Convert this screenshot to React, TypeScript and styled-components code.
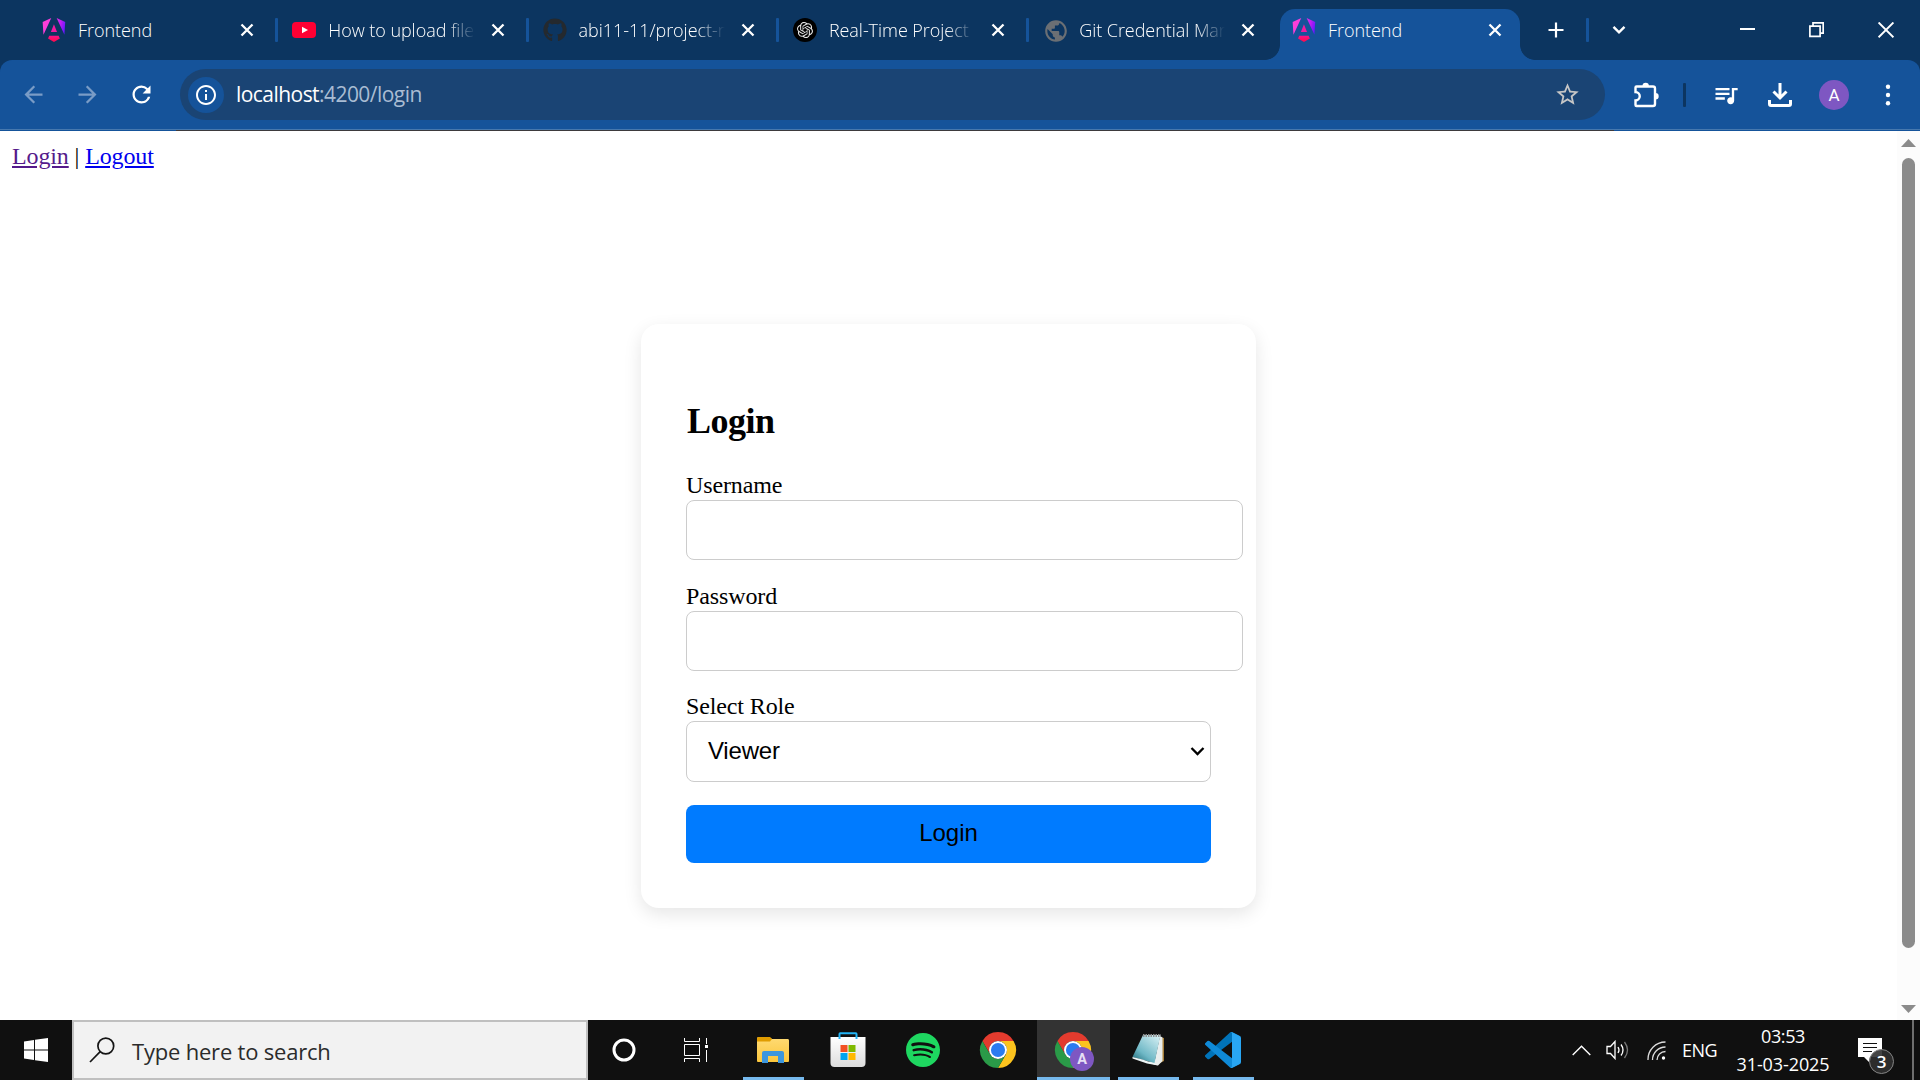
import React from "react";
import styled, { createGlobalStyle } from "styled-components";
import { FaGithub } from "react-icons/fa";
import { SiOpenai, SiSpotify } from "react-icons/si";
import {
  MdArrowBack,
  MdArrowForward,
  MdRefresh,
  MdInfoOutline,
  MdStarBorder,
  MdQueueMusic,
  MdPublic,
} from "react-icons/md";

const ui = `"Segoe UI", "Open Sans", "Noto Sans", sans-serif`;

const GlobalStyle = createGlobalStyle`
  *, *::before, *::after { box-sizing: border-box; }
  body { margin: 0; overflow: hidden; background: #fff; }
  svg { display: block; flex: none; }
`;

const Screen = styled.div`
  display: flex;
  flex-direction: column;
  width: 1920px;
  height: 1080px;
  overflow: hidden;
`;

/* Tab strip */
const TabStrip = styled.div`
  display: flex;
  height: 60px;
  flex: none;
  padding-left: 26px;
  background: #0c3560;
  color: #fff;
  font-family: ${ui};
`;

const Tab = styled.div<{ $active?: boolean }>`
  position: relative;
  display: flex;
  align-items: center;
  width: ${(p) => (p.$active ? 240 : 250.3)}px;
  height: ${(p) => (p.$active ? 51 : 60)}px;
  margin-top: ${(p) => (p.$active ? 9 : 0)}px;
  margin-left: ${(p) => (p.$active ? 2.5 : 0)}px;
  padding: ${(p) => (p.$active ? "0 14px 9px 12px" : "0 18px 0 16px")};
  flex: none;
  border-radius: 15px 15px 0 0;
  background: ${(p) => (p.$active ? "#15539a" : "transparent")};
  &::before,
  &::after {
    content: ${(p) => (p.$active ? '""' : "none")};
    position: absolute;
    bottom: 0;
    width: 15px;
    height: 15px;
  }
  &::before {
    left: -15px;
    background: radial-gradient(circle at 0 0, transparent 14.5px, #15539a 15.2px);
  }
  &::after {
    right: -15px;
    background: radial-gradient(circle at 100% 0, transparent 14.5px, #15539a 15.2px);
  }
`;

const Favicon = styled.span`
  display: grid;
  place-items: center;
  width: 24px;
  height: 24px;
  flex: none;
`;

const TabTitle = styled.span<{ $fade?: boolean }>`
  flex: 1;
  margin: 0 12px 0 12px;
  padding-bottom: 1px;
  overflow: hidden;
  white-space: nowrap;
  font-size: 18px;
  font-weight: 300;
  line-height: 26px;
  letter-spacing: -0.05px;
  mask-image: ${(p) => (p.$fade ? "linear-gradient(90deg, #000 80%, transparent 100%)" : "none")};
`;

const Separator = styled.span`
  width: 3px;
  height: 24px;
  flex: none;
  border-radius: 1px;
  background: #15539a;
`;

const ToolbarDivider = styled(Separator)`
  margin: 0 13px 0 10px;
  background: #0c3560;
`;

const TabEdge = styled(Separator)`
  position: absolute;
  right: -2px;
  top: 18px;
`;

const StripButton = styled.span<{ $w: number }>`
  display: grid;
  place-items: center;
  width: ${(p) => p.$w}px;
  height: 60px;
  flex: none;
`;

const StripTools = styled.div`
  display: flex;
  align-items: center;
  margin-left: 6px;
  flex: 1;
`;

const WindowButtons = styled.div`
  display: flex;
  margin-left: auto;
`;

/* Toolbar */
const ToolbarBack = styled.div`
  flex: none;
  background: #0c3560;
`;

const Toolbar = styled.div`
  display: flex;
  align-items: center;
  height: 69px;
  padding-left: 6px;
  border-radius: 12px 12px 0 0;
  background: #15539a;
  color: #fff;
  font-family: ${ui};
`;

const ToolSlot = styled.span<{ $dim?: boolean }>`
  display: grid;
  place-items: center;
  width: 54px;
  height: 54px;
  flex: none;
  color: ${(p) => (p.$dim ? "#7a9cc6" : "#fff")};
`;

const Omnibox = styled.div`
  display: flex;
  align-items: center;
  width: 1425px;
  height: 51px;
  margin: 0 14px 0 12px;
  padding: 0 24px 0 8px;
  border-radius: 26px;
  background: #1a4474;
`;

const InfoChip = styled.span`
  display: grid;
  place-items: center;
  width: 36px;
  height: 36px;
  border-radius: 50%;
  background: #15539a;
`;

const Url = styled.span`
  flex: 1;
  margin-left: 12px;
  padding-bottom: 1px;
  font-size: 21px;
  line-height: 30px;
  letter-spacing: -0.55px;
  color: #a9bcd3;
`;

const Host = styled.span`
  color: #fff;
`;

const Avatar = styled.span`
  display: grid;
  place-items: center;
  width: 30px;
  height: 30px;
  border-radius: 50%;
  background: #7e57c2;
  color: #fff;
  font: 400 17px/30px Roboto, sans-serif;
`;

const EdgeLine = styled.div`
  height: 2px;
  flex: none;
  padding: 1px 306px 0 176px;
  background: linear-gradient(#4678ae 50%, #15539a 50%);
`;

const EdgeShade = styled.div`
  height: 1px;
  background: #3d3a3c;
`;

/* Page */
const Viewport = styled.div`
  display: flex;
  flex: 1;
  min-height: 0;
  background: #fff;
`;

const Page = styled.main`
  display: flex;
  flex-direction: column;
  flex: 1;
  padding: 12px;
  color: #000;
  font: 24px/27px "Liberation Serif", "Times New Roman", serif;
`;

const Nav = styled.nav`
  height: 27px;
  letter-spacing: -0.12px;
`;

const NavLink = styled.a<{ $visited?: boolean }>`
  color: ${(p) => (p.$visited ? "#551a8b" : "#0000ee")};
  text-decoration: underline;
`;

const Card = styled.form`
  width: 615px;
  height: 584px;
  margin: 154px auto 0;
  padding: 45px;
  border-radius: 18px;
  background: #fff;
  box-shadow: 0 6px 18px rgba(0, 0, 0, 0.1);
`;

const Title = styled.h2`
  margin: 32px 0 31px 1px;
  font-size: 36px;
  font-weight: 700;
  line-height: 41px;
  letter-spacing: -0.5px;
`;

const Field = styled.div<{ $gap: number }>`
  display: flex;
  flex-direction: column;
  margin-bottom: ${(p) => p.$gap}px;
`;

const FieldLabel = styled.label`
  padding-bottom: 2px;
  line-height: 25px;
  letter-spacing: -0.12px;
`;

const Input = styled.input`
  width: 557px;
  height: 60px;
  padding: 15px;
  border: 1px solid #ccc;
  border-radius: 8px;
  background: #fff;
`;

const Select = styled.div`
  display: flex;
  align-items: center;
  justify-content: space-between;
  width: 525px;
  height: 61px;
  padding: 0 5px 1px 21px;
  border: 1px solid #ccc;
  border-radius: 8px;
  font: 24px/28px "Liberation Sans", Arial, sans-serif;
  letter-spacing: -0.2px;
`;

const Submit = styled.button`
  display: block;
  width: 525px;
  height: 58px;
  padding: 0 0 2px;
  border: 0;
  border-radius: 8px;
  background: #007bff;
  color: #000;
  font: 24px/28px "Liberation Sans", Arial, sans-serif;
`;

const Scrollbar = styled.div`
  display: flex;
  flex-direction: column;
  align-items: center;
  width: 23px;
  padding: 8px 0 7px;
  background: #fcfcfc;
`;

const Thumb = styled.div`
  width: 13px;
  height: 790px;
  margin: 11px 0 auto;
  border-radius: 7px;
  background: #8b8b8b;
`;

/* Taskbar */
const Taskbar = styled.div`
  display: flex;
  height: 60px;
  flex: none;
  background: #101010;
  color: #fff;
  font-family: ${ui};
`;

const TaskSlot = styled.div<{ $w?: number; $running?: boolean; $active?: boolean }>`
  display: flex;
  align-items: center;
  justify-content: center;
  width: ${(p) => p.$w ?? 75}px;
  height: 60px;
  flex: none;
  background: ${(p) =>
    p.$running
      ? `linear-gradient(#76b9ed, #76b9ed) center bottom / ${p.$active ? 73 : 61}px 3px no-repeat, ${
          p.$active ? "linear-gradient(#333, #333) center / 73px 100% no-repeat" : "none"
        }`
      : "none"};
`;

const SearchBox = styled.div`
  display: flex;
  align-items: center;
  width: 516px;
  height: 60px;
  padding-left: 15px;
  flex: none;
  border: 2px solid #c0c0c0;
  background: #f2f2f2;
  color: #2b2b2b;
  font-size: 22px;
`;

const SearchText = styled.span`
  margin: 2px 0 0 17px;
  letter-spacing: -0.2px;
  line-height: 30px;
`;

const Apps = styled.div`
  display: flex;
  margin-left: 4px;
  & > div {
    padding-right: 2px;
  }
`;

const Tray = styled.div`
  display: flex;
  align-items: center;
  margin-left: auto;
  height: 60px;
`;

const Lang = styled.span`
  width: 40px;
  margin-left: 8px;
  font-size: 18px;
  line-height: 24px;
  letter-spacing: -0.5px;
`;

const Clock = styled.div`
  display: flex;
  flex-direction: column;
  align-items: center;
  width: 110px;
  margin-left: 6px;
  font-size: 18px;
  line-height: 28px;
  letter-spacing: -0.1px;
  white-space: nowrap;
`;

const Time = styled.span`
  letter-spacing: -0.4px;
`;

const Notifications = styled.div`
  position: relative;
  width: 24px;
  height: 24px;
  margin-left: 20px;
`;

const Badge = styled.span`
  position: absolute;
  left: 11px;
  top: 11px;
  width: 25px;
  height: 25px;
  border: 1px solid #858585;
  border-radius: 50%;
  background: rgba(48, 48, 48, 0.9);
  font-size: 17px;
  font-weight: 600;
  line-height: 23px;
  text-align: center;
`;

const ShowDesktop = styled.span`
  width: 8px;
  height: 60px;
  margin-left: 30px;
  border-left: 2px solid #6f6f6f;
`;

const AngularIcon = ({ id }: { id: string }) => (
  <svg width="24" height="24" viewBox="0 0 223 236">
    <defs>
      <linearGradient id={`${id}-a`} gradientUnits="userSpaceOnUse" x1="0" y1="60" x2="223" y2="110">
        <stop offset="0" stopColor="#ff41d5" />
        <stop offset="0.45" stopColor="#f637e3" />
        <stop offset="0.75" stopColor="#c01cf2" />
        <stop offset="1" stopColor="#5c18ff" />
      </linearGradient>
      <linearGradient id={`${id}-b`} x1="0" y1="0" x2="0" y2="1">
        <stop offset="0" stopColor="#f9138a" />
        <stop offset="1" stopColor="#ff0a48" />
      </linearGradient>
    </defs>
    <path
      fill={`url(#${id}-a)`}
      d="m222.077 39.192-8.019 125.923L137.387 0l84.69 39.192ZM7.937 165.115 0 39.192 84.69 0 7.937 165.115Z"
    />
    <path fill={`url(#${id}-b)`} d="m168.972 202.017-57.933 33.056-57.934-33.056 11.783-28.556h92.301l11.783 28.556Z" />
    <path fill="#f21ba0" d="m111.039 62.675 30.357 73.803H80.681l30.358-73.803Z" />
  </svg>
);

const YouTubeIcon = () => (
  <svg width="24" height="24" viewBox="0 0 24 24">
    <rect y="4" width="24" height="16" rx="4" fill="#ff0033" />
    <path d="M10 8.7v6.600l6-3.300z" fill="#fff" />
  </svg>
);

const ChatIcon = () => (
  <svg width="24" height="24" viewBox="0 0 24 24">
    <circle cx="12" cy="12" r="12" fill="#000" />
    <SiOpenai x="4" y="4" size={16} color="#e8e8e8" />
  </svg>
);

const CrossIcon = () => (
  <svg width="14" height="14" viewBox="0 0 14 14" stroke="#fff" strokeWidth="2.300">
    <path d="M1.500 1.500l11 11M12.500 1.500l-11 11" />
  </svg>
);

const ChromeIcon = ({ profile }: { profile?: boolean }) => (
  <svg width="40" height="40" viewBox="-2 -2 40 40" overflow="visible">
    <g transform="scale(.75)">
      <path fill="#e33b2e" d="M24 12H44.785A24 24 0 0 0 3.215 12L13.608 30A12 12 0 0 1 24 12Z" />
      <path fill="#fcc31e" d="M34.390 30L24 48A24 24 0 0 0 44.785 12H24A12 12 0 0 1 34.390 30Z" />
      <path fill="#2a9a48" d="M13.608 30L3.215 12A24 24 0 0 0 24 48L34.390 30A12 12 0 0 1 13.608 30Z" />
      <circle cx="24" cy="24" r="12" fill="#fff" />
      <circle cx="24" cy="24" r="9.400" fill="#2b7bf0" />
    </g>
    {profile && (
      <g>
        <circle cx="27" cy="27" r="12" fill="#7e57c2" />
        <text x="27" y="32.200" fill="#e6def4" fontSize="14.500" fontWeight="700" fontFamily="Roboto, sans-serif" textAnchor="middle">
          A
        </text>
      </g>
    )}
  </svg>
);

const FolderIcon = () => (
  <svg width="32" height="27" viewBox="0 0 32 27">
    <defs>
      <linearGradient id="folder" x1="0" y1="0" x2="0" y2="1">
        <stop offset="0" stopColor="#ffdb75" />
        <stop offset="1" stopColor="#fbc63c" />
      </linearGradient>
    </defs>
    <path d="M0 1.500Q0 0 1.500 0H12l3 2H31q1 0 1 1.500V24q0 1-1 1H1q-1 0-1-1z" fill="url(#folder)" />
    <path d="M0 4.500V1.500Q0 0 1.500 0H13l2 2-2 2.500z" fill="#e09c00" />
    <path d="M5 26V16q0-2 2-2h18q2 0 2 2v10h-6v-7H11v7z" fill="#3c96dd" />
  </svg>
);

const StoreIcon = () => (
  <svg width="36" height="36" viewBox="0 0 36 36">
    <defs>
      <linearGradient id="bag" x1="0" y1="0" x2="0" y2="1">
        <stop offset="0" stopColor="#fff" />
        <stop offset="1" stopColor="#dcdcdc" />
      </linearGradient>
    </defs>
    <path d="M.5 5h35v26q0 4-4 4h-27q-4 0-4-4z" fill="url(#bag)" />
    <path d="M9.500 7V2q0-.7.700-.7h15.600q.7 0 .7.700v5" fill="none" stroke="#22b4f5" strokeWidth="2" />
    <path fill="#f25022" d="M10.500 13h7v7h-7z" />
    <path fill="#7fba00" d="M18.500 13h7v7h-7z" />
    <path fill="#00a4ef" d="M10.500 21h7v7h-7z" />
    <path fill="#ffb900" d="M18.500 21h7v7h-7z" />
  </svg>
);

const NotepadIcon = () => (
  <svg width="34" height="34" viewBox="0 0 34 34">
    <defs>
      <linearGradient id="cover" x1="0" y1="1" x2=".8" y2="0">
        <stop offset="0" stopColor="#17616f" />
        <stop offset=".4" stopColor="#6fb8c6" />
        <stop offset="1" stopColor="#cdebf0" />
      </linearGradient>
    </defs>
    <path d="M29 4l4 1v23l-4 2z" fill="#a8803a" />
    <path d="M29 3l2.500 1.500V28L27 32.500l-11-3 8-3z" fill="#e9eeee" />
    <path d="M12 2h17.500l-6 28L1.500 24z" fill="url(#cover)" />
    <path d="M1.500 24l10 2.500 13 4.500 2.500 1.500-11-2-14.500-5z" fill="#eef6f7" />
    <path d="M12 2.500h18" stroke="#8f8f8f" strokeWidth="3" strokeDasharray="1.500 1" />
  </svg>
);

const CodeIcon = () => (
  <svg width="36" height="36" viewBox="0 0 100 100">
    <path
      fill="#0073b9"
      d="M96.461 10.796 75.857.876a6.230 6.230 0 0 0-7.107 1.207L1.299 63.583a4.167 4.167 0 0 0 .004 6.162l5.510 5.009a4.167 4.167 0 0 0 5.321.236l81.227-61.620c2.725-2.067 6.639-.124 6.639 3.297v-.240a6.250 6.250 0 0 0-3.539-5.631Z"
    />
    <path
      fill="#0f8ad8"
      d="m96.461 89.204-20.604 9.920a6.230 6.230 0 0 1-7.107-1.207L1.299 36.417a4.167 4.167 0 0 1 .004-6.162l5.510-5.009a4.167 4.167 0 0 1 5.321-.236l81.227 61.620c2.725 2.067 6.639.124 6.639-3.297v.240a6.250 6.250 0 0 1-3.539 5.631Z"
    />
    <path
      fill="#29a6f3"
      d="M75.858 99.126a6.230 6.230 0 0 1-7.108-1.209C71.056 100.223 75 98.590 75 95.328V4.672c0-3.262-3.944-4.895-6.250-2.589A6.230 6.230 0 0 1 75.858.874l20.601 9.907A6.250 6.250 0 0 1 100 16.413v67.174a6.250 6.250 0 0 1-3.541 5.633l-20.601 9.906Z"
    />
  </svg>
);

const tabs: { title: string; icon: React.ReactNode; fade?: boolean; active?: boolean }[] = [
  { title: "Frontend", icon: <AngularIcon id="first" /> },
  { title: "How to upload files", icon: <YouTubeIcon />, fade: true },
  { title: "abi11-11/project-m", icon: <FaGithub size={24} color="#24292e" />, fade: true },
  { title: "Real-Time Project I", icon: <ChatIcon />, fade: true },
  { title: "Git Credential Man", icon: <MdPublic size={26} color="#6b6f74" />, fade: true },
  { title: "Frontend", icon: <AngularIcon id="last" />, active: true },
];

export default function App() {
  return (
    <Screen>
      <GlobalStyle />
      <TabStrip>
        {tabs.map((t, i) => (
          <Tab key={i} $active={t.active}>
            <Favicon>{t.icon}</Favicon>
            <TabTitle $fade={t.fade}>{t.title}</TabTitle>
            <StripButton $w={22}>
              <CrossIcon />
            </StripButton>
            {i < 4 && <TabEdge />}
          </Tab>
        ))}
        <StripTools>
          <StripButton $w={60}>
            <svg width="16" height="16" viewBox="0 0 16 16" stroke="#fff" strokeWidth="2.200">
              <path d="M8 .5v15M.5 8h15" />
            </svg>
          </StripButton>
          <Separator />
          <StripButton $w={60}>
            <svg width="14" height="10" viewBox="0 0 14 10" fill="none" stroke="#fff" strokeWidth="2.400">
              <path d="M1.500 1.800L7 7.300l5.500-5.500" />
            </svg>
          </StripButton>
          <WindowButtons>
            <StripButton $w={69}>
              <svg width="15" height="16" viewBox="0 0 15 16">
                <path d="M0 6h15v2H0z" fill="#fff" />
              </svg>
            </StripButton>
            <StripButton $w={69}>
              <svg width="15" height="17" viewBox="0 0 15 17" fill="none" stroke="#fff" strokeWidth="1.700">
                <path d="M.9 4.100h10.200v10.200H.9zM4 4V.9h10.200v10.200H11" />
              </svg>
            </StripButton>
            <StripButton $w={69}>
              <svg width="16" height="17" viewBox="0 0 16 17" stroke="#fff" strokeWidth="1.900">
                <path d="M.6.500l14.800 14.800M15.400.500L.6 15.300" />
              </svg>
            </StripButton>
          </WindowButtons>
        </StripTools>
      </TabStrip>

      <ToolbarBack>
        <Toolbar>
          <ToolSlot $dim>
            <MdArrowBack size={27} />
          </ToolSlot>
          <ToolSlot $dim>
            <MdArrowForward size={27} />
          </ToolSlot>
          <ToolSlot>
            <MdRefresh size={27} />
          </ToolSlot>
          <Omnibox>
            <InfoChip>
              <MdInfoOutline size={24} />
            </InfoChip>
            <Url>
              <Host>localhost</Host>:4200/login
            </Url>
            <MdStarBorder size={27} color="#c6c6c6" />
          </Omnibox>
          <ToolSlot>
            <svg width="26" height="26" viewBox="0 0 26 26">
              <path
                d="M3.500 4.500h16.500q2 0 2 2V22q0 2-2 2H3.500q-1 0-1-1v-4.500a3.600 3.600 0 0 0 0-8.500V5.500q0-1 1-1z"
                fill="none"
                stroke="#fff"
                strokeWidth="2.400"
              />
              <path d="M9.500 4a3.200 3.200 0 0 1 6.400 0zM22.500 11a3.200 3.200 0 0 1 0 6.400z" fill="#fff" />
            </svg>
          </ToolSlot>
          <ToolbarDivider />
          <ToolSlot>
            <MdQueueMusic size={28} />
          </ToolSlot>
          <ToolSlot>
            <svg width="24" height="26" viewBox="0 0 24 26" fill="none" stroke="#fff" strokeWidth="3">
              <path d="M12 1v14M5.500 9.500L12 16l6.500-6.500" />
              <path d="M1.500 18v4q0 1.500 1.500 1.500h18q1.500 0 1.500-1.500v-4" />
            </svg>
          </ToolSlot>
          <ToolSlot>
            <Avatar>A</Avatar>
          </ToolSlot>
          <ToolSlot>
            <svg width="6" height="22" viewBox="0 0 6 22" fill="#fff">
              <circle cx="3" cy="2.700" r="2.200" />
              <circle cx="3" cy="11" r="2.200" />
              <circle cx="3" cy="19.300" r="2.200" />
            </svg>
          </ToolSlot>
        </Toolbar>
      </ToolbarBack>
      <EdgeLine>
        <EdgeShade />
      </EdgeLine>

      <Viewport>
        <Page>
          <Nav>
            <NavLink $visited>Login</NavLink> | <NavLink>Logout</NavLink>
          </Nav>
          <Card>
            <Title>Login</Title>
            <Field $gap={24}>
              <FieldLabel>Username</FieldLabel>
              <Input type="text" />
            </Field>
            <Field $gap={23}>
              <FieldLabel>Password</FieldLabel>
              <Input type="password" />
            </Field>
            <Field $gap={23}>
              <FieldLabel>Select Role</FieldLabel>
              <Select>
                Viewer
                <svg width="15" height="11" viewBox="0 0 15 11" fill="none" stroke="#000" strokeWidth="2.300">
                  <path d="M1.500 2l6 6 6-6" />
                </svg>
              </Select>
            </Field>
            <Submit type="button">Login</Submit>
          </Card>
        </Page>
        <Scrollbar>
          <svg width="15" height="8" viewBox="0 0 15 8">
            <path d="M7.500 0L15 8H0z" fill="#8b8b8b" />
          </svg>
          <Thumb />
          <svg width="15" height="8" viewBox="0 0 15 8">
            <path d="M7.500 8L15 0H0z" fill="#8b8b8b" />
          </svg>
        </Scrollbar>
      </Viewport>

      <Taskbar>
        <TaskSlot $w={72}>
          <svg width="24" height="24" viewBox="0 0 24 24" fill="#fff">
            <path d="M0 3.400l10-1.400v9.500H0zM11 1.800L24 0v11.500H11zM0 12.500h10V22L0 20.600zM11 12.500h13V24l-13-1.800z" />
          </svg>
        </TaskSlot>
        <SearchBox>
          <svg width="26" height="26" viewBox="0 0 26 26" fill="none" stroke="#151515" strokeWidth="1.700">
            <circle cx="16.800" cy="9" r="7.900" />
            <path d="M11.200 14.600L1 25" />
          </svg>
          <SearchText>Type here to search</SearchText>
        </SearchBox>
        <TaskSlot $w={72}>
          <svg width="24" height="24" viewBox="0 0 24 24">
            <circle cx="12" cy="12" r="10" fill="none" stroke="#fff" strokeWidth="3" />
          </svg>
        </TaskSlot>
        <TaskSlot $w={72}>
          <svg width="24" height="24" viewBox="0 0 24 24" fill="none" stroke="#fff">
            <path d="M.5 0v3.500h15V0M.5 24v-3.500h15V24M.5 6.500h15v11H.5zM22.500 0v6M22.500 12v12" />
            <path d="M21 7h3v3h-3z" fill="#fff" stroke="none" />
          </svg>
        </TaskSlot>
        <Apps>
          <TaskSlot $running>
            <FolderIcon />
          </TaskSlot>
          <TaskSlot>
            <StoreIcon />
          </TaskSlot>
          <TaskSlot>
            <SiSpotify size={34} color="#1ed760" />
          </TaskSlot>
          <TaskSlot>
            <ChromeIcon />
          </TaskSlot>
          <TaskSlot $running $active>
            <ChromeIcon profile />
          </TaskSlot>
          <TaskSlot $running>
            <NotepadIcon />
          </TaskSlot>
          <TaskSlot $running>
            <CodeIcon />
          </TaskSlot>
        </Apps>
        <Tray>
          <TaskSlot $w={33}>
            <svg width="19" height="11" viewBox="0 0 19 11" fill="none" stroke="#fff" strokeWidth="1.400">
              <path d="M.7 10L9.500 1.200 18.300 10" />
            </svg>
          </TaskSlot>
          <TaskSlot $w={40}>
            <svg width="24" height="20" viewBox="0 0 24 20" fill="none" stroke="#fff" strokeWidth="1.300">
              <path d="M1 6.500h3.500L9 1.500v17l-4.500-5H1z" />
              <path d="M12 7q2 3 0 6" />
              <path d="M15 4.500q4 5.500 0 11" />
              <path d="M18.500 2q6 8 0 16" stroke="#777" />
            </svg>
          </TaskSlot>
          <TaskSlot $w={36}>
            <svg width="19" height="19" viewBox="0 0 19 19" fill="none" stroke="#ddd" strokeWidth="1.300">
              <path d="M1 19A17.500 17.500 0 0 1 18.500 1M5.500 19A13 13 0 0 1 18.500 6M10 19A8.500 8.500 0 0 1 18.500 10.500" />
              <circle cx="16.500" cy="17" r="1.700" fill="#fff" stroke="none" />
            </svg>
          </TaskSlot>
          <Lang>ENG</Lang>
          <Clock>
            <Time>03:53</Time>
            <span>31-03-2025</span>
          </Clock>
          <Notifications>
            <svg width="24" height="24" viewBox="0 0 24 24">
              <path d="M0 0h24v19H12l-1 5-5-5H0z" fill="#fff" />
              <path d="M5 5.500h14M5 9.500h14M5 13.500h9" stroke="#101010" strokeWidth="1.200" />
            </svg>
            <Badge>3</Badge>
          </Notifications>
          <ShowDesktop />
        </Tray>
      </Taskbar>
    </Screen>
  );
}
